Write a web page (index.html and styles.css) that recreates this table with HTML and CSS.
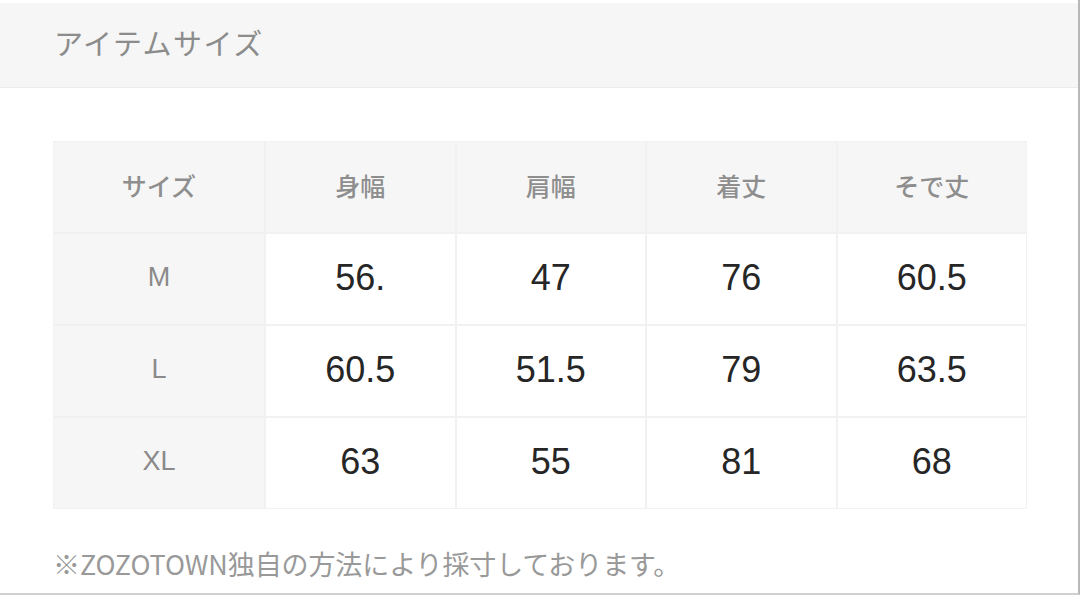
FILE: index.html
```html
<!DOCTYPE html>
<html lang="ja">
<head>
<meta charset="utf-8">
<link rel="stylesheet" href="styles.css">
</head>
<body>
<div class="page">
  <div class="title-bar"><h2 class="title">アイテムサイズ</h2></div>
  <div class="content">
    <div class="size-table">
      <div class="cell head">サイズ</div>
      <div class="cell head">身幅</div>
      <div class="cell head">肩幅</div>
      <div class="cell head">着丈</div>
      <div class="cell head">そで丈</div>

      <div class="cell label">M</div>
      <div class="cell val">56.</div>
      <div class="cell val">47</div>
      <div class="cell val">76</div>
      <div class="cell val">60.5</div>

      <div class="cell label">L</div>
      <div class="cell val">60.5</div>
      <div class="cell val">51.5</div>
      <div class="cell val">79</div>
      <div class="cell val">63.5</div>

      <div class="cell label">XL</div>
      <div class="cell val">63</div>
      <div class="cell val">55</div>
      <div class="cell val">81</div>
      <div class="cell val">68</div>
    </div>
    <p class="note">※ZOZOTOWN独自の方法により採寸しております。</p>
  </div>
</div>
</body>
</html>
```
FILE: styles.css
```css
html, body {
  margin: 0;
  padding: 0;
  background: #fff;
}
.page {
  width: 1078px;
  height: 593px;
  border-right: 2px solid #b8b8b8;
  border-bottom: 2px solid #d0d0d0;
  overflow: hidden;
  font-family: "Noto Sans CJK JP", "Liberation Sans", sans-serif;
}
.title-bar {
  height: 85px;
  margin-top: 3px;
  background: #f6f6f6;
  border-bottom: 1px solid #ececec;
  display: flex;
  align-items: center;
  padding-left: 54px;
  padding-bottom: 5px;
  box-sizing: border-box;
}
.title {
  margin: 0;
  font-size: 29px;
  font-weight: 400;
  color: #8c8c8c;
  line-height: 1;
  letter-spacing: 1.5px;
}
.content {
  padding: 53px 0 0 53px;
}
.size-table {
  width: 974px;
  display: grid;
  grid-template-columns: 210px repeat(4, 1fr);
  grid-auto-rows: 90px;
  gap: 2px;
  background: #f1f1f1;
  border: 1px solid #f2f2f2;
  box-sizing: border-box;
}
.cell {
  display: flex;
  align-items: center;
  justify-content: center;
  background: #fff;
}
.head {
  background: #f6f6f6;
  font-size: 25px;
  font-weight: 500;
  color: #8e8e8e;
  padding-bottom: 4px;
}
.label {
  background: #f6f6f6;
  font-family: "Liberation Sans", Arial, sans-serif;
  font-size: 27px;
  color: #8a8a8a;
  padding-bottom: 3px;
}
.val {
  font-family: "Liberation Sans", Arial, sans-serif;
  font-size: 36px;
  color: #262626;
  padding-bottom: 3px;
}
.note {
  margin: 39px 0 0 0;
  font-size: 27px;
  color: #999;
  line-height: 1.2;
  letter-spacing: -0.1px;
}
```
